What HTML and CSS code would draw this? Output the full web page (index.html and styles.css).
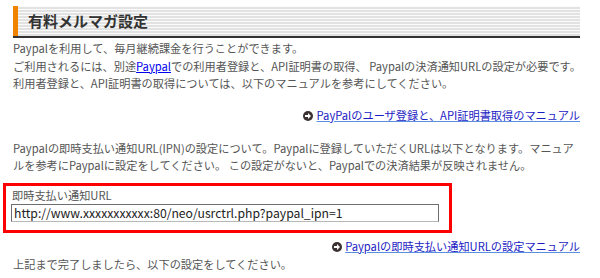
FILE: index.html
```html
<!DOCTYPE html>
<html lang="ja">
<head>
    <meta charset="UTF-8">
    <title>有料メルマガ設定</title>
    <link rel="stylesheet" href="styles.css">
</head>
<body>
    <div class="page">
        <h2 class="title">有料メルマガ設定</h2>

        <p class="text">
            Paypalを利用して、毎月継続課金を行うことができます。<br>
            ご利用されるには、別途<a class="inline-link" href="#">Paypal</a>での利用者登録と、API証明書の取得、 Paypalの決済通知URLの設定が必要です。<br>
            利用者登録と、API証明書の取得については、以下のマニュアルを参考にしてください。
        </p>

        <div class="manual">
            <a href="#">
                <svg class="arrow" width="10" height="10" viewBox="0 0 10 10"><circle cx="5" cy="5" r="5" fill="#3b3131"/><path d="M2 4h3V2l3 3-3 3V6H2z" fill="#fff"/></svg>
                <span>PayPalのユーザ登録と、API証明書取得のマニュアル</span>
            </a>
        </div>

        <p class="text second">
            Paypalの即時支払い通知URL(IPN)の設定について。Paypalに登録していただくURLは以下となります。マニュア<br>
            ルを参考にPaypalに設定をしてください。 この設定がないと、Paypalでの決済結果が反映されません。
        </p>

        <div class="ipn-box">
            <label for="ipn-url">即時支払い通知URL</label>
            <input type="text" id="ipn-url" value="http://www.xxxxxxxxxxx:80/neo/usrctrl.php?paypal_ipn=1">
        </div>

        <div class="manual manual-ipn">
            <a href="#">
                <svg class="arrow" width="10" height="10" viewBox="0 0 10 10"><circle cx="5" cy="5" r="5" fill="#3b3131"/><path d="M2 4h3V2l3 3-3 3V6H2z" fill="#fff"/></svg>
                <span>Paypalの即時支払い通知URLの設定マニュアル</span>
            </a>
        </div>

        <p class="text last">上記まで完了しましたら、以下の設定をしてください。</p>
    </div>
</body>
</html>
```

FILE: styles.css
```css
body {
    margin: 0;
    background: #fff;
    font-family: "Noto Sans CJK JP", "Liberation Sans", sans-serif;
    font-size: 11.2px;
    color: #555;
}
.page {
    padding: 6px 20px 0 13px;
}
.title {
    margin: 0;
    height: 30px;
    line-height: 30px;
    padding-left: 15px;
    font-size: 15px;
    font-weight: bold;
    color: #333;
    border-bottom: 2px solid #333;
    background:
        linear-gradient(to right, #f08300 5px, transparent 5px),
        repeating-linear-gradient(to bottom, #fbfbfb 0, #fbfbfb 1px, #e2e2e2 1px, #e2e2e2 3px);
}
.text {
    margin: 2px 0 0;
    line-height: 17.5px;
    white-space: nowrap;
}
.inline-link {
    color: #0000ee;
}
.manual {
    margin-top: 13px;
    text-align: right;
    line-height: 18px;
}
.manual a {
    color: #1c1cc4;
    text-decoration: none;
}
.manual a span {
    text-decoration: underline;
    text-decoration-color: #5a8fe0;
}
.arrow {
    vertical-align: -1px;
    margin-right: 1px;
}
.second {
    margin-top: 16px;
}
.ipn-box {
    margin: 8px 0 0 -10px;
    width: 434px;
    padding: 1px 3px 8px 6px;
    border: 3px solid #f00;
}
.ipn-box label {
    display: block;
    line-height: 16px;
    color: #555;
}
.ipn-box input {
    display: block;
    box-sizing: border-box;
    width: 428px;
    height: 18px;
    margin: 1px 0 0 -1px;
    padding: 0 2px;
    border: 1px solid #6e6e6e;
    border-bottom-color: #b8b8b8;
    font-family: "Noto Sans CJK JP", "Liberation Sans", sans-serif;
    font-size: 12.2px;
    color: #222;
}
.manual-ipn {
    margin-top: 4px;
}
.last {
    margin-top: 1px;
}
```
